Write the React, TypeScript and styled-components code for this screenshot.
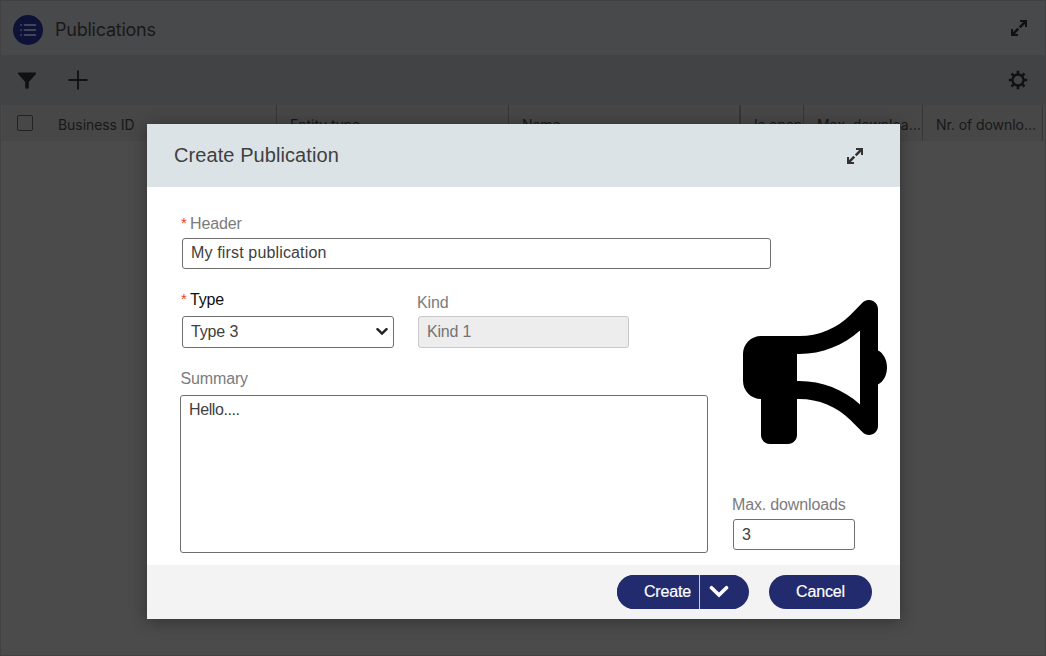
import React from 'react';
import styled, { createGlobalStyle } from 'styled-components';
import { FaBullhorn } from 'react-icons/fa6';

const GlobalStyle = createGlobalStyle`
  *, *::before, *::after { box-sizing: border-box; }
  body { margin: 0; overflow: hidden; background: #4c4c4c; font-family: "Liberation Sans", Arial, sans-serif; }
  svg { display: block; flex: none; }
  input, select, textarea, button { font-family: inherit; }
`;

const Page = styled.div`
  width: 1046px;
  height: 656px;
  display: flex;
  flex-direction: column;
  background: #4b4b4b;
  border: 1px solid #424242;
  border-top-color: #3f4041;
`;

const PageHeader = styled.header`
  height: 54px;
  display: flex;
  align-items: center;
  padding: 5px 17px 0 12px;
  background: #48494a;

  & > svg { margin-top: -6px; }
`;

const Badge = styled.span`
  width: 30px;
  height: 30px;
  margin-top: -1px;
  border-radius: 50%;
  background: #0f1238;
  display: flex;
  align-items: center;
  justify-content: center;
`;

const PageTitle = styled.h1`
  margin: -1px auto 0 12px;
  font: 400 18px/24px Inter, sans-serif;
  letter-spacing: -0.24px;
  color: #191919;
`;

const Toolbar = styled.div`
  height: 50px;
  display: flex;
  align-items: center;
  gap: 32px;
  padding: 0 17px 0 16px;
  background: #424345;
`;

const Spacer = styled.span`
  flex: 1;
`;

const TableHead = styled.div`
  height: 36px;
  display: flex;
  background: #474747;
  margin: 0 2px 0 1px;
`;

const HeadCell = styled.div<{ $width: number; $left?: number; $strong?: boolean }>`
  width: ${p => p.$width}px;
  flex: none;
  padding: 3px 0 0 ${p => p.$left ?? 13}px;
  border-right: ${p => (p.$strong ? 2 : 1)}px solid #363636;
  display: flex;
  align-items: center;
  overflow: hidden;
  white-space: nowrap;
  font: 400 14px/20px Inter, sans-serif;
  letter-spacing: -0.06px;
  color: #181818;
`;

const CheckBox = styled.span`
  width: 16px;
  height: 16px;
  border: 1px solid #222;
  border-radius: 2px;
  margin: -4px 25px 0 0;
`;

const Dialog = styled.section`
  position: absolute;
  left: 147px;
  top: 124px;
  width: 753px;
  height: 495px;
  display: flex;
  flex-direction: column;
  background: #fff;
  box-shadow: 0 2px 16px rgba(0, 0, 0, 0.35);
`;

const DialogHeader = styled.header`
  height: 63px;
  display: flex;
  align-items: center;
  justify-content: space-between;
  padding: 0 36px 0 27px;
  background: #dce3e6;
`;

const DialogTitle = styled.h2`
  margin: -2px 0 0;
  font-weight: 400;
  font-size: 20px;
  line-height: 24px;
  letter-spacing: 0.08px;
  color: #404040;
`;

const Form = styled.div`
  height: 378px;
  display: flex;
`;

const MainColumn = styled.div`
  width: 585px;
  flex: none;
  padding: 27px 0 0 33px;
`;

const SideColumn = styled.div`
  flex: 1;
  display: flex;
  flex-direction: column;
  padding-top: 113px;
`;

const FieldRow = styled.div`
  display: flex;
  align-items: flex-end;
  gap: 24px;
  margin: 21px 0 0 2px;
`;

const Field = styled.div`
  display: flex;
  flex-direction: column;
`;

const Label = styled.label<{ $color?: string; $spacing?: number; $indent?: number; $gap?: number }>`
  display: flex;
  font-size: 16px;
  line-height: 20px;
  letter-spacing: ${p => p.$spacing ?? -0.15}px;
  margin-left: ${p => p.$indent ?? 0}px;
  margin-bottom: ${p => p.$gap ?? 4}px;
  color: ${p => p.$color ?? '#7b7b7b'};
`;

const SummaryField = styled(Field)`
  margin-top: 21px;
`;

const Required = styled.span`
  width: 10px;
  height: 20px;
  margin-top: -1px;
  padding-left: 1px;
  font-size: 15px;
  letter-spacing: 0;
  color: #f03a30;
`;

const TextInput = styled.input<{ $width: number; $height?: number; $spacing?: number; $indent?: number; $drop?: boolean }>`
  width: ${p => p.$width}px;
  height: ${p => p.$height ?? 31}px;
  margin-left: ${p => p.$indent ?? 0}px;
  padding: 0 8px ${p => (p.$drop ? 0 : 2)}px;
  border: 1px solid #6f6f6f;
  border-radius: 3px;
  background: #fff;
  font-size: 16px;
  letter-spacing: ${p => p.$spacing ?? 0}px;
  color: #404040;
  outline: none;

  &:disabled {
    background: #ededed;
    border-color: #c8c8c8;
    color: #737373;
  }
`;

const SelectBox = styled.div`
  position: relative;
  width: 212px;
  height: 32px;

  svg {
    position: absolute;
    right: 6px;
    top: 11px;
    pointer-events: none;
  }
`;

const Select = styled.select`
  appearance: none;
  width: 100%;
  height: 100%;
  padding: 0 8px 2px;
  border: 1px solid #6f6f6f;
  border-radius: 3px;
  background: #fff;
  font-size: 16px;
  letter-spacing: -0.15px;
  color: #404040;
`;

const TextArea = styled.textarea`
  display: block;
  width: 528px;
  height: 158px;
  padding: 4px 8px;
  border: 1px solid #6f6f6f;
  border-radius: 3px;
  resize: none;
  font-size: 16px;
  line-height: 20px;
  letter-spacing: -0.4px;
  color: #404040;
`;

const Illustration = styled.div`
  margin: 0 0 51px 11px;
  height: 144px;
`;

const DialogFooter = styled.footer`
  flex: 1;
  display: flex;
  justify-content: flex-end;
  gap: 20px;
  padding: 10px 28px 0 0;
  background: #f3f3f3;
`;

const SplitButton = styled.div`
  display: flex;
  width: 132px;
  height: 34px;
  border-radius: 17px;
  overflow: hidden;
  background: #222b6e;
`;

const Action = styled.button<{ $width: number; $pill?: boolean; $divider?: boolean }>`
  width: ${p => p.$width}px;
  height: 34px;
  padding: 0 0 1px ${p => (p.$divider ? 19 : 0)}px;
  border: 0;
  border-right: ${p => (p.$divider ? '1px solid #c9cbdb' : '0')};
  border-radius: ${p => (p.$pill ? 17 : 0)}px;
  background: #222b6e;
  color: #fff;
  font-size: 16px;
  letter-spacing: -0.15px;
  -webkit-text-stroke: 0.2px #fff;
  display: flex;
  align-items: center;
  justify-content: center;
`;

const ExpandIcon = ({ color }: { color: string }) => (
  <svg width="18" height="18" viewBox="0 0 18 18" fill="none" stroke={color} strokeWidth="2">
    <path d="M10 2H16v6M8 16H2v-6" />
    <path d="M15.500 2.500 9.700 8.300M2.500 15.500l5.800-5.800" strokeWidth="2.500" />
  </svg>
);

const ListIcon = () => (
  <svg width="18" height="14" viewBox="0 0 18 14" stroke="#55565e" strokeWidth="1.600" strokeLinecap="round">
    <path d="M5.500 2H16.500M5.500 7H16.500M5.500 12H16.500M1.900 2h.3M1.900 7h.3M1.900 12h.3" />
  </svg>
);

const FilterIcon = () => (
  <svg width="19" height="17" viewBox="0 0 19 17" fill="#111">
    <path d="M1.500.5h17c.7 0 .7 1.200.2 1.800L11.800 10v5.200c0 2-3.600 2-3.600 0V10L1.300 2.300C.8 1.700.8.500 1.500.5z" />
  </svg>
);

const PlusIcon = () => (
  <svg width="20" height="20" viewBox="0 0 20 20" stroke="#111" strokeWidth="1.8">
    <path d="M10 .5v19M.5 10h19" />
  </svg>
);

const GearIcon = () => (
  <svg width="20" height="20" viewBox="0 0 20 20" fill="none" stroke="#111">
    <circle cx="10" cy="10" r="5.500" strokeWidth="2.300" />
    <path
      d="M10 .8v3.200M10 16v3.200M.8 10h3.200M16 10h3.200M3.500 3.500l2.200 2.200M14.300 14.300l2.200 2.200M3.500 16.500l2.200-2.200M14.300 5.700l2.200-2.200"
      strokeWidth="2.600"
    />
  </svg>
);

const Chevron = ({ width, height, color, weight = 3.6 }: { width: number; height: number; color: string; weight?: number }) => (
  <svg width={width} height={height} viewBox="0 0 20 12" fill="none" stroke={color} strokeWidth={weight} strokeLinecap="round">
    <path d="m2.500 2.200 7.500 7.300 7.500-7.300" />
  </svg>
);

export default function App() {
  return (
    <>
      <GlobalStyle />
      <Page>
        <PageHeader>
          <Badge><ListIcon /></Badge>
          <PageTitle>Publications</PageTitle>
          <ExpandIcon color="#111" />
        </PageHeader>
        <Toolbar>
          <FilterIcon />
          <PlusIcon />
          <Spacer />
          <GearIcon />
        </Toolbar>
        <TableHead>
          <HeadCell $width={275} $left={15}><CheckBox />Business ID</HeadCell>
          <HeadCell $width={232}>Entity type</HeadCell>
          <HeadCell $width={232} $strong>Name</HeadCell>
          <HeadCell $width={63}>Is open</HeadCell>
          <HeadCell $width={119}>Max. downloa…</HeadCell>
          <HeadCell $width={120}>Nr. of downlo…</HeadCell>
        </TableHead>
      </Page>
      <Dialog>
        <DialogHeader>
          <DialogTitle>Create Publication</DialogTitle>
          <ExpandIcon color="#333" />
        </DialogHeader>
        <Form>
          <MainColumn>
            <Field>
              <Label><Required>*</Required>Header</Label>
              <TextInput $width={589} $indent={2} $spacing={0.15} defaultValue="My first publication" />
            </Field>
            <FieldRow>
              <Field>
                <Label $color="#111" $indent={-2} $gap={6}><Required>*</Required>Type</Label>
                <SelectBox>
                  <Select defaultValue="Type 3"><option>Type 3</option></Select>
                  <Chevron width={12} height={9} color="#222" weight={4.2} />
                </SelectBox>
              </Field>
              <Field>
                <Label $indent={-1} $gap={3}>Kind</Label>
                <TextInput $width={211} $height={32} $spacing={-0.2} $drop defaultValue="Kind 1" disabled />
              </Field>
            </FieldRow>
            <SummaryField>
              <Label $gap={6} $indent={0.5}>Summary</Label>
              <TextArea defaultValue="Hello...." />
            </SummaryField>
          </MainColumn>
          <SideColumn>
            <Illustration><FaBullhorn size={144} color="#000" /></Illustration>
            <Label>Max. downloads</Label>
            <TextInput $width={122} $indent={1} $drop defaultValue="3" />
          </SideColumn>
        </Form>
        <DialogFooter>
          <SplitButton>
            <Action $width={83} $divider>Create</Action>
            <Action $width={38}><Chevron width={20} height={13} color="#fff" /></Action>
          </SplitButton>
          <Action $width={103} $pill>Cancel</Action>
        </DialogFooter>
      </Dialog>
    </>
  );
}
